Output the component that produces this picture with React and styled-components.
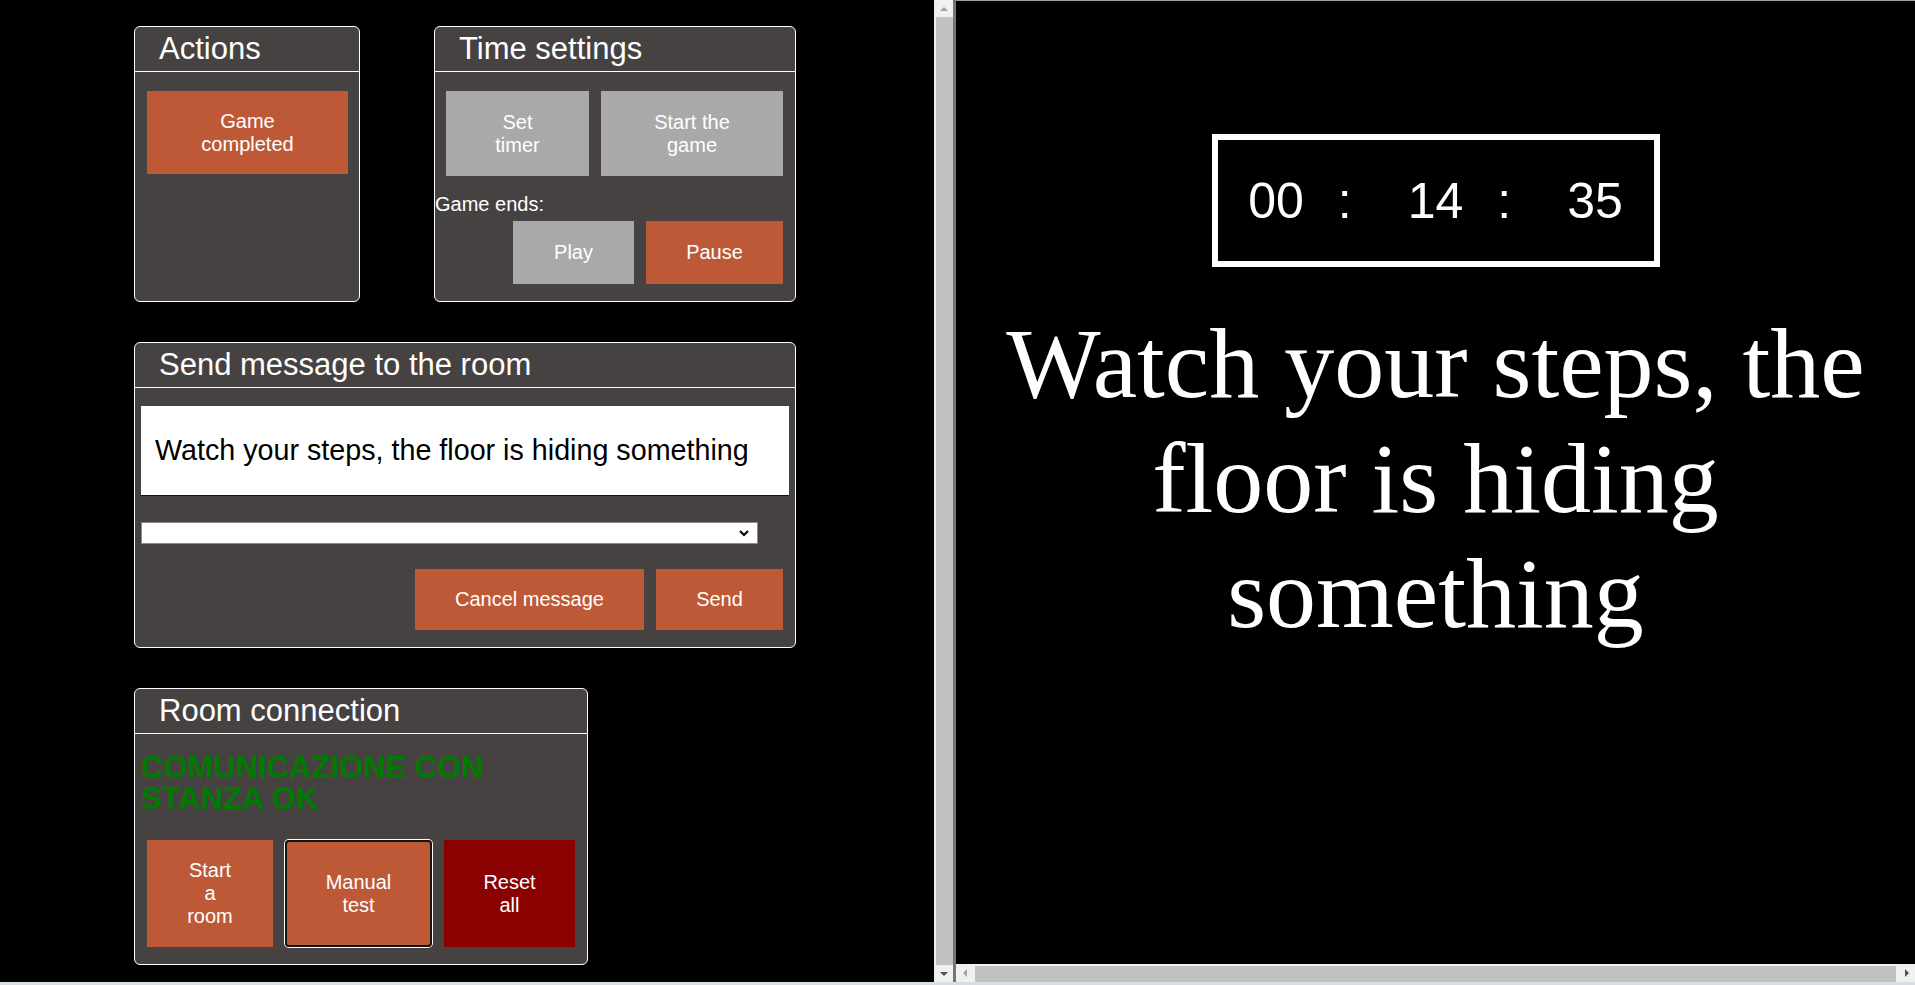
import React from "react";
import styled, { createGlobalStyle } from "styled-components";

const GlobalStyle = createGlobalStyle`
  html, body {
    margin: 0;
    padding: 0;
    background: #000;
    overflow: hidden;
  }

  body {
    font-family: "Liberation Sans", Arial, sans-serif;
  }
`;

const Screen = styled.div`
  width: 1915px;
  height: 985px;
  display: flex;
  flex-direction: column;
  background: #000;
`;

const Frames = styled.div`
  flex: 1;
  min-height: 0;
  display: flex;
`;

const BottomEdge = styled.div`
  height: 3px;
  background: #dadee3;
`;

/* ---------- left frame (control panel) ---------- */

const ControlFrame = styled.div`
  width: 934px;
  flex-shrink: 0;
  box-sizing: border-box;
  padding: 26px 0 0 134px;
  display: flex;
  flex-direction: column;
  gap: 40px;
  overflow: hidden;
`;

const PanelRow = styled.div`
  display: flex;
  gap: 74px;
`;

const Panel = styled.section`
  width: ${(p) => p.$w}px;
  height: ${(p) => p.$h}px;
  box-sizing: border-box;
  border: 1px solid #fff;
  border-radius: 6px;
  background: #464241;
  display: flex;
  flex-direction: column;
  overflow: hidden;
  flex-shrink: 0;
`;

const PanelTitle = styled.h2`
  margin: 0;
  height: 44px;
  line-height: 44px;
  padding-left: 24px;
  border-bottom: 1px solid #fff;
  font-size: 31px;
  font-weight: normal;
  color: #fff;
  white-space: nowrap;
`;

const colors = {
  orange: "#be5938",
  gray: "#a9a9a9",
  red: "#8b0000",
};

const Button = styled.button`
  width: ${(p) => p.$w}px;
  height: ${(p) => p.$h}px;
  flex-shrink: 0;
  padding: 0;
  border: none;
  border-radius: ${(p) => (p.$focused ? "4px" : "0")};
  background: ${(p) => colors[p.$tone || "orange"]};
  color: #fff;
  font-family: "Liberation Sans", Arial, sans-serif;
  font-size: 20px;
  line-height: 23px;
  text-align: center;
  cursor: pointer;
  box-shadow: ${(p) =>
    p.$focused ? "0 0 0 1px #fff, inset 0 0 0 2px #141414" : "none"};
`;

const ActionsBody = styled.div`
  padding: 19px 12px 0;
`;

const TimeBody = styled.div`
  padding: 19px 12px 0 0;
  display: flex;
  flex-direction: column;
`;

const ButtonRow = styled.div`
  display: flex;
  gap: ${(p) => p.$gap || 12}px;
  justify-content: ${(p) => (p.$end ? "flex-end" : "flex-start")};
  padding-left: ${(p) => p.$indent || 0}px;
  padding-right: ${(p) => p.$trail || 0}px;
  margin-top: ${(p) => p.$top || 0}px;
`;

const FieldLabel = styled.div`
  margin-top: 17px;
  font-size: 20px;
  line-height: 23px;
  color: #fff;
`;

const MessageBody = styled.div`
  padding: 18px 6px 0;
  display: flex;
  flex-direction: column;
`;

const MessageBox = styled.div`
  height: 89px;
  background: #fff;
  border-bottom: 1px solid #111;
  display: flex;
  align-items: center;
  padding-left: 14px;
  font-size: 28.7px;
  color: #000;
  white-space: nowrap;
`;

const Dropdown = styled.div`
  margin-top: 26px;
  width: 617px;
  height: 22px;
  box-sizing: border-box;
  background: #fff;
  border: 1px solid #8a8a8a;
  display: flex;
  align-items: center;
  justify-content: flex-end;
  padding-right: 8px;
`;

const RoomBody = styled.div`
  padding: 19px 12px 0;
  display: flex;
  flex-direction: column;
`;

const StatusText = styled.div`
  margin-left: -6px;
  font-size: 31px;
  line-height: 30.6px;
  font-weight: bold;
  color: #007a00;
`;

/* ---------- scrollbars ---------- */

const VScroll = styled.div`
  width: 19px;
  flex-shrink: 0;
  background: #f0f0f0;
  display: flex;
  flex-direction: column;
`;

const HScroll = styled.div`
  height: 18px;
  flex-shrink: 0;
  background: #f0f0f0;
  display: flex;
`;

const ScrollArrow = styled.div`
  flex: 0 0 17px;
  display: flex;
  align-items: center;
  justify-content: center;
`;

const Thumb = styled.div`
  flex: 1;
  background: #c1c1c1;
  margin: ${(p) => (p.$horizontal ? "2px 2px 0" : "0 0 0 2px")};
`;

const Triangle = styled.span`
  width: 0;
  height: 0;
  ${({ $dir, $dark }) => {
    const c = $dark ? "#505050" : "#a3a3a3";
    if ($dir === "up")
      return `border-left: 4px solid transparent; border-right: 4px solid transparent; border-bottom: 4px solid ${c};`;
    if ($dir === "down")
      return `border-left: 4px solid transparent; border-right: 4px solid transparent; border-top: 4px solid ${c};`;
    if ($dir === "left")
      return `border-top: 4px solid transparent; border-bottom: 4px solid transparent; border-right: 4px solid ${c};`;
    return `border-top: 4px solid transparent; border-bottom: 4px solid transparent; border-left: 4px solid ${c};`;
  }}
`;

const Divider = styled.div`
  width: 3px;
  flex-shrink: 0;
  background: #767676;
`;

/* ---------- right frame (room display) ---------- */

const DisplayFrame = styled.div`
  flex: 1;
  min-width: 0;
  display: flex;
  flex-direction: column;
  border-top: 1px solid #9c9c9c;
`;

const Stage = styled.div`
  flex: 1;
  min-height: 0;
  overflow: hidden;
  display: flex;
  flex-direction: column;
  align-items: center;
  padding-top: 133px;
`;

const Countdown = styled.div`
  width: 448px;
  height: 133px;
  box-sizing: border-box;
  border: 6px solid #fff;
  display: flex;
  align-items: center;
  justify-content: center;
  font-size: 50px;
  color: #fff;
`;

const Digits = styled.span`
  line-height: 1;
`;

const Colon = styled.span`
  line-height: 1;
  margin: 0 56px 0 34px;
`;

const BigMessage = styled.div`
  margin-top: 39px;
  font-family: "Liberation Serif", "Times New Roman", serif;
  font-size: 100px;
  line-height: 115px;
  color: #fff;
  text-align: center;
`;

const Chevron = () => (
  <svg width="10" height="7" viewBox="0 0 10 7">
    <polyline points="1,1 5,5 9,1" fill="none" stroke="#000" strokeWidth="2" />
  </svg>
);

const App = () => {
  const message = "Watch your steps, the floor is hiding something";

  return (
    <Screen>
      <GlobalStyle />
      <Frames>
        <ControlFrame>
          <PanelRow>
            <Panel $w={226} $h={276}>
              <PanelTitle>Actions</PanelTitle>
              <ActionsBody>
                <Button $w={201} $h={83}>
                  Game
                  <br />
                  completed
                </Button>
              </ActionsBody>
            </Panel>

            <Panel $w={362} $h={276}>
              <PanelTitle>Time settings</PanelTitle>
              <TimeBody>
                <ButtonRow $indent={11}>
                  <Button $tone="gray" $w={143} $h={85}>
                    Set
                    <br />
                    timer
                  </Button>
                  <Button $tone="gray" $w={182} $h={85}>
                    Start the
                    <br />
                    game
                  </Button>
                </ButtonRow>
                <FieldLabel>Game ends:</FieldLabel>
                <ButtonRow $end $top={5}>
                  <Button $tone="gray" $w={121} $h={63}>
                    Play
                  </Button>
                  <Button $w={137} $h={63}>
                    Pause
                  </Button>
                </ButtonRow>
              </TimeBody>
            </Panel>
          </PanelRow>

          <Panel $w={662} $h={306}>
            <PanelTitle>Send message to the room</PanelTitle>
            <MessageBody>
              <MessageBox>{message}</MessageBox>
              <Dropdown>
                <Chevron />
              </Dropdown>
              <ButtonRow $end $top={25} $trail={6}>
                <Button $w={229} $h={61}>
                  Cancel message
                </Button>
                <Button $w={127} $h={61}>
                  Send
                </Button>
              </ButtonRow>
            </MessageBody>
          </Panel>

          <Panel $w={454} $h={277}>
            <PanelTitle>Room connection</PanelTitle>
            <RoomBody>
              <StatusText>COMUNICAZIONE CON STANZA OK</StatusText>
              <ButtonRow $top={26}>
                <Button $w={126} $h={107}>
                  Start
                  <br />a<br />
                  room
                </Button>
                <Button $w={147} $h={107} $focused>
                  Manual
                  <br />
                  test
                </Button>
                <Button $tone="red" $w={131} $h={107}>
                  Reset
                  <br />
                  all
                </Button>
              </ButtonRow>
            </RoomBody>
          </Panel>
        </ControlFrame>

        <VScroll>
          <ScrollArrow>
            <Triangle $dir="up" />
          </ScrollArrow>
          <Thumb />
          <ScrollArrow>
            <Triangle $dir="down" $dark />
          </ScrollArrow>
        </VScroll>
        <Divider />

        <DisplayFrame>
          <Stage>
            <Countdown>
              <Digits>00</Digits>
              <Colon>:</Colon>
              <Digits>14</Digits>
              <Colon>:</Colon>
              <Digits>35</Digits>
            </Countdown>
            <BigMessage>{message}</BigMessage>
          </Stage>
          <HScroll>
            <ScrollArrow>
              <Triangle $dir="left" />
            </ScrollArrow>
            <Thumb $horizontal />
            <ScrollArrow>
              <Triangle $dir="right" $dark />
            </ScrollArrow>
          </HScroll>
        </DisplayFrame>
      </Frames>
      <BottomEdge />
    </Screen>
  );
};

export default App;
